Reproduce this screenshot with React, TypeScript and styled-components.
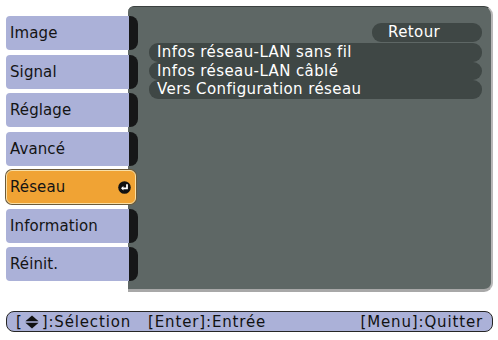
import styled, { createGlobalStyle, css } from "styled-components";

const GlobalStyle = createGlobalStyle`
  body {
    margin: 0;
    background: #ffffff;
    font-family: "DejaVu Sans", "Liberation Sans", sans-serif;
  }
`;

const lavender = "#abb1d8";

const Screen = styled.div`
  width: 498px;
  height: 340px;
  box-sizing: border-box;
  padding: 6px 5px 0 6px;
  display: flex;
  flex-direction: column;
`;

const Main = styled.div`
  display: flex;
  height: 286px;
`;

const Menu = styled.div`
  width: 132px;
  margin-right: -10px;
  padding-top: 10px;
  display: flex;
  flex-direction: column;
  gap: 4.5px;
  position: relative;
  z-index: 1;
`;

const Tab = styled.div<{ $active?: boolean }>`
  display: flex;
  height: 34px;
  box-sizing: border-box;
  ${(p) =>
    p.$active &&
    css`
      width: 130px;
      background: #f0a334;
      border: 1px solid #f9dfa6;
      border-radius: 6px;
      box-shadow: 0 0 0 1px #6b5a3a;
      align-items: center;
      padding: 0 4px 0 3px;
    `}
`;

const TabBody = styled.div`
  flex: 1;
  background: ${lavender};
  border-radius: 4px 0 0 4px;
  display: flex;
  align-items: center;
  padding-left: 4px;
`;

const Label = styled.span`
  font-size: 15px;
  color: #141414;
  letter-spacing: 0.1px;
  flex: 1;
`;

const Bump = styled.div`
  width: 9px;
  background: #161718;
  border-radius: 0 8px 8px 0;
`;

const Panel = styled.div`
  flex: 1;
  background: #5e6765;
  border-top: 1px solid #3b403f;
  border-right: 2px solid #b8b8b8;
  border-bottom: 3px solid #a8a8a8;
  border-radius: 6px 9px 9px 0;
  padding: 16px 9px 0 21px;
  display: flex;
  flex-direction: column;
`;

const Pill = styled.div<{ $back?: boolean }>`
  background: #3f4745;
  color: #ffffff;
  font-size: 15px;
  letter-spacing: 0.4px;
  border-radius: 9px;
  box-sizing: border-box;
  white-space: nowrap;
  ${(p) =>
    p.$back
      ? css`
          align-self: flex-end;
          width: 110px;
          height: 19px;
          line-height: 19px;
          padding-left: 16px;
          margin-bottom: 1px;
        `
      : css`
          height: 18.5px;
          line-height: 18px;
          padding-left: 8px;
        `}
`;

const Bar = styled.div`
  margin-top: 19px;
  height: 21px;
  width: 487px;
  box-sizing: border-box;
  border: 1px solid #262626;
  border-radius: 8px;
  background: ${lavender};
  display: flex;
  align-items: center;
  padding: 0 9px 0 9px;
  font-size: 15px;
  color: #111111;
  letter-spacing: 0.85px;
  white-space: nowrap;
`;

const Hint = styled.span<{ $right?: boolean; $gap?: number }>`
  display: inline-flex;
  align-items: center;
  margin-left: ${(p) => (p.$right ? "auto" : `${p.$gap ?? 0}px`)};
`;

const Arrows = styled.svg`
  margin: 0 3px 0 2px;
`;

const EnterIcon = () => (
  <svg width="13" height="13" viewBox="0 0 13 13">
    <circle cx="6.5" cy="6.5" r="6.3" fill="#111" />
    <path d="M9 3.2 V7.3 H4.6" stroke="#fff" strokeWidth="1.8" fill="none" />
    <path d="M3 7.3 L5.4 5 V9.6 Z" fill="#fff" />
  </svg>
);

const UpDown = () => (
  <Arrows width="14" height="14" viewBox="0 0 14 14">
    <path d="M7 0.4 L13.6 6.3 H0.4 Z" fill="#111" />
    <path d="M7 13.6 L13.6 7.7 H0.4 Z" fill="#111" />
  </Arrows>
);

const items = ["Image", "Signal", "Réglage", "Avancé", "Réseau", "Information", "Réinit."];
const options = [
  "Infos réseau-LAN sans fil",
  "Infos réseau-LAN câblé",
  "Vers Configuration réseau",
];

export default function App() {
  return (
    <Screen>
      <GlobalStyle />
      <Main>
        <Menu>
          {items.map((it) =>
            it === "Réseau" ? (
              <Tab $active key={it}>
                <Label>{it}</Label>
                <EnterIcon />
              </Tab>
            ) : (
              <Tab key={it}>
                <TabBody>
                  <Label>{it}</Label>
                </TabBody>
                <Bump />
              </Tab>
            )
          )}
        </Menu>
        <Panel>
          <Pill $back>Retour</Pill>
          {options.map((o) => (
            <Pill key={o}>{o}</Pill>
          ))}
        </Panel>
      </Main>
      <Bar>
        <Hint>
          [<UpDown />]:Sélection
        </Hint>
        <Hint $gap={17}>[Enter]:Entrée</Hint>
        <Hint $right>[Menu]:Quitter</Hint>
      </Bar>
    </Screen>
  );
}
